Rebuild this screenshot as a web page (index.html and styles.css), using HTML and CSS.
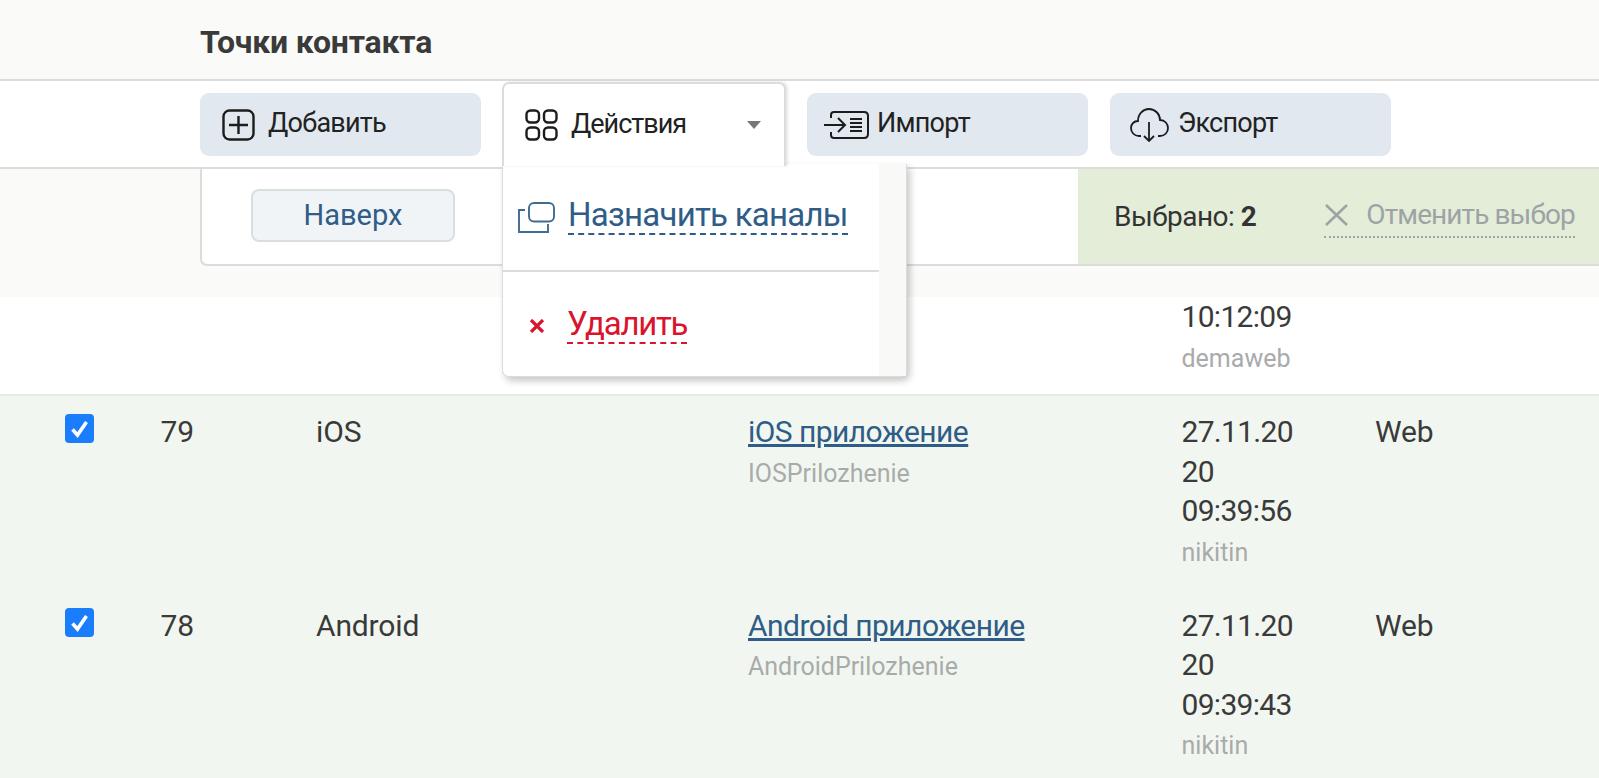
FILE: index.html
```html
<!DOCTYPE html>
<html lang="ru">
<head>
<meta charset="utf-8">
<title>Точки контакта</title>
<link rel="stylesheet" href="styles.css">
</head>
<body>
<div class="page">
  <header class="title-bar"><h1 class="title">Точки контакта</h1></header>

  <div class="toolbar">
    <button class="tool add">
      <svg class="ico-add" viewBox="0 0 33 32" fill="none" stroke="#1c1c1c" stroke-width="2.4"><rect x="1.5" y="1.5" width="30" height="29" rx="6"/><path d="M16.5 7v18M7 16h19"/></svg>
      <span class="tool-label">Добавить</span>
    </button>
    <div class="tab-wrap">
      <button class="tab">
        <svg class="ico-grid" viewBox="0 0 33 32" fill="none" stroke="#1c1c1c" stroke-width="2.4"><rect x="1.5" y="1.5" width="12.5" height="12" rx="4"/><rect x="19" y="1.5" width="12.5" height="12" rx="4"/><rect x="1.5" y="18.5" width="12.5" height="12" rx="4"/><rect x="19" y="18.5" width="12.5" height="12" rx="4"/></svg>
        <span class="tool-label tab-label">Действия</span>
        <i class="caret"></i>
      </button>
      <div class="menu">
        <div class="menu-list">
          <a class="menu-item blue">
            <svg class="ico-channels" viewBox="0 0 37 31" fill="none" stroke="#3f6b90" stroke-width="1.9"><path d="M7 8H1v22h29v-8"/><rect x="11" y="1" width="25" height="18.5" rx="5" fill="#fff"/></svg>
            <span class="menu-text">Назначить каналы</span>
          </a>
          <a class="menu-item red">
            <svg class="ico-x" viewBox="0 0 16 14" fill="none" stroke="#d9142c" stroke-width="3.2"><path d="M2 1l12 12M14 1L2 13"/></svg>
            <span class="menu-text">Удалить</span>
          </a>
        </div>
        <div class="menu-scroll"></div>
      </div>
    </div>
    <button class="tool import">
      <svg class="ico-import" viewBox="0 0 46 28" fill="none" stroke="#1c1c1c" stroke-width="2"><path d="M8 7V4q0-3 3-3h30q4 0 4 4v18q0 4-4 4H11q-3 0-3-3v-3"/><path d="M1 14h21M15 7l7 7-7 7"/><path d="M27 8h12M27 12h12M27 16h12M27 20h12" stroke-width="2.2"/></svg>
      <span class="tool-label">Импорт</span>
    </button>
    <button class="tool export">
      <svg class="ico-export" viewBox="0 0 39 34" fill="none" stroke="#1c1c1c" stroke-width="1.8"><path d="M11 28H9C4 28 1 24 1 20c0-4 3-7 7-7 0-7 5-12 11-12 6 0 11 5 11 11 5 0 8 4 8 8s-3 8-8 8h-2"/><path d="M19 14v19M14 28l5 5 5-5"/></svg>
      <span class="tool-label">Экспорт</span>
    </button>
  </div>

  <div class="selection-band">
    <div class="selection-panel">
      <button class="top-btn">Наверх</button>
      <div class="selected">
        <span class="selected-count">Выбрано: <b>2</b></span>
        <a class="clear">
          <svg class="ico-clear" viewBox="0 0 25 22" fill="none" stroke="#9ea3a6" stroke-width="2.6"><path d="M2 1l21 20M23 1L2 21"/></svg>
          <span>Отменить выбор</span>
        </a>
      </div>
    </div>
  </div>

  <div class="row first">
    <span></span><span></span><span></span><span></span>
    <div class="cell-date"><span class="line">10:12:09</span><span class="sub">demaweb</span></div>
    <span></span>
  </div>

  <div class="row picked">
    <span class="check"><svg viewBox="0 0 29 29"><path d="M7.5 15.5l5 5.5 9-13" fill="none" stroke="#fff" stroke-width="3.6"/></svg></span>
    <span class="line">79</span>
    <span class="line">iOS</span>
    <div><a class="line link">iOS приложение</a><span class="sub">IOSPrilozhenie</span></div>
    <div class="cell-date"><span class="line">27.11.20</span><span class="line">20</span><span class="line">09:39:56</span><span class="sub">nikitin</span></div>
    <span class="line">Web</span>
  </div>

  <div class="row picked">
    <span class="check"><svg viewBox="0 0 29 29"><path d="M7.5 15.5l5 5.5 9-13" fill="none" stroke="#fff" stroke-width="3.6"/></svg></span>
    <span class="line">78</span>
    <span class="line">Android</span>
    <div><a class="line link">Android приложение</a><span class="sub">AndroidPrilozhenie</span></div>
    <div class="cell-date"><span class="line">27.11.20</span><span class="line">20</span><span class="line">09:39:43</span><span class="sub">nikitin</span></div>
    <span class="line">Web</span>
  </div>
</div>
</body>
</html>
```
FILE: styles.css
```css
* { box-sizing: border-box; }
html, body { margin: 0; padding: 0; height: 100%; overflow: hidden; background: #fff; }
body { font-family: "Roboto", "Liberation Sans", sans-serif; color: #3a3a3a; }
.page { width: 1599px; height: 778px; overflow: hidden; }
button { font: inherit; margin: 0; cursor: default; }

.title-bar { height: 81px; padding: 20px 0 0 200px; background: #fafaf8; border-bottom: 2px solid #dcdcda; }
.title { margin: 0; font-size: 32px; line-height: 44px; font-weight: 700; letter-spacing: -.2px; color: #3a3a3a; }

.toolbar { display: flex; height: 88px; padding: 12px 0 0 200px; gap: 21px; border-bottom: 2px solid #dcdcda; position: relative; z-index: 3; }
.tool { display: flex; align-items: center; width: 281px; height: 63px; padding: 0 0 0 22px; border: 0; border-radius: 9px; background: #e1e8ef; font-size: 27px; color: #222; }
.tool.export { margin-left: 1px; }
.tool-label { letter-spacing: -.75px; padding-bottom: 3px; }
.ico-add { width: 33px; height: 32px; margin-right: 13px; }
.ico-import { width: 46px; height: 28px; margin: 0 8px 0 -6px; }
.ico-export { width: 39px; height: 34px; margin: 0 9px 0 -2px; }

.tab-wrap { position: relative; width: 284px; height: 84px; margin-top: -11px; }
.tab { display: flex; align-items: center; width: 100%; height: 84px; padding: 0 23px 0 21px; background: #fff; border: 2px solid #dcdcda; border-bottom: 0; border-radius: 7px 7px 0 0; font-size: 27px; color: #222; position: relative; z-index: 2; box-shadow: 2px 0 3px rgba(0,0,0,.1); }
.ico-grid { width: 33px; height: 32px; margin-right: 13px; }
.tab-label { flex: 1; text-align: left; letter-spacing: -1px; }
.caret { width: 0; height: 0; border-left: 7px solid transparent; border-right: 7px solid transparent; border-top: 8px solid #777; }

.menu { position: absolute; left: 0; top: 82px; width: 405px; height: 213px; display: flex; background: #fff; border: 1px solid #dcdcda; border-top: 0; border-radius: 0 0 7px 7px; box-shadow: 3px 4px 7px rgba(0,0,0,.22); }
.menu-list { flex: 1; display: flex; flex-direction: column; }
.menu-scroll { width: 27px; background: #f9f9f8; }
.menu-item { display: flex; align-items: center; padding: 0 0 0 15px; font-size: 33px; letter-spacing: -.75px; }
.menu-item.blue { height: 109px; border-bottom: 2px solid #dcdcda; color: #2f5d87; }
.menu-item.red { height: 104px; color: #d9142c; padding-left: 26px; padding-top: 4px; letter-spacing: -1.3px; }
.ico-channels { width: 37px; height: 31px; margin-right: 13px; }
.ico-x { width: 16px; height: 14px; margin-right: 22px; }
.menu-text { border-bottom: 2px dashed currentColor; line-height: 32px; padding-bottom: 2px; }

.selection-band { height: 128px; padding-left: 200px; background: #fafaf8; }
.selection-panel { display: flex; align-items: flex-start; height: 97px; padding-left: 49px; background: #fff; border-left: 2px solid #dcdcda; border-bottom: 2px solid #dcdcda; border-bottom-left-radius: 7px; }
.top-btn { width: 204px; height: 53px; margin-top: 20px; padding-bottom: 3px; background: #f1f4f7; border: 2px solid #d9dfdf; border-radius: 8px; font-size: 29px; color: #2f5d87; }
.selected { display: flex; align-items: center; margin-left: auto; width: 521px; height: 95px; padding-left: 36px; background: #e3edd8; font-size: 28px; color: #333; }
.selected-count { margin-right: 68px; letter-spacing: -.5px; }
.clear { display: flex; align-items: center; gap: 17px; height: 42px; border-bottom: 2px dotted #9ea3a6; color: #9ea3a6; letter-spacing: -.9px; padding-bottom: 2px; }
.ico-clear { width: 25px; height: 22px; }

.row { display: grid; grid-template-columns: 95.5px 155.5px 432px 433.5px 193.5px 1fr; padding-left: 65px; font-size: 30px; line-height: 39.5px; color: #3a3a3a; letter-spacing: -.15px; }
.row.first { height: 99px; padding-top: 0; border-bottom: 2px solid #e6e9e6; }
.row.picked { height: 193.5px; padding-top: 16px; background: #f1f7f0; }
.line { display: block; }
.cell-date .line { letter-spacing: -.7px; }
.sub { display: block; font-size: 25px; color: #a9abab; margin-top: 2px; letter-spacing: 0; }
.link { width: max-content; color: #2f5d87; text-decoration: underline; letter-spacing: -.55px; }
.check { display: block; width: 29px; height: 29px; margin-top: 2px; background: #1a7dfb; border-radius: 4px; }
.check svg { display: block; width: 29px; height: 29px; }
```
